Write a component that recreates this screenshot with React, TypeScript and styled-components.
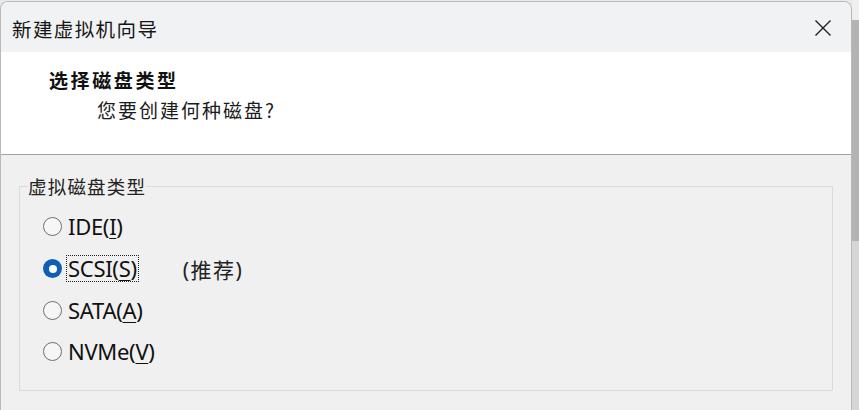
import React from "react";
import styled, { createGlobalStyle } from "styled-components";

const Global = createGlobalStyle`
  html, body { margin: 0; padding: 0; }
  body {
    width: 859px; height: 410px; overflow: hidden;
    background: #e9e9e9;
    font-family: "Noto Sans", "Noto Sans CJK SC", sans-serif;
  }
`;

const Screen = styled.div`
  display: flex;
  width: 859px;
  height: 410px;
`;

const Window = styled.div`
  flex: 1;
  margin-top: 1px;
  display: flex;
  flex-direction: column;
  border: 1px solid #b9b9b9;
  border-bottom: none;
  border-radius: 8px 8px 0 0;
  overflow: hidden;
  background: #f0f0f0;
`;

const TitleBar = styled.div`
  height: 50px;
  flex-shrink: 0;
  background: #f1f2f4;
  display: flex;
  align-items: center;
  justify-content: space-between;
  padding: 0 19px 0 11px;
`;

const TitleText = styled.div`
  font-family: "Noto Sans CJK SC", sans-serif;
  font-size: 19.5px;
  letter-spacing: 1.4px;
  color: #161616;
  padding-top: 2px;
`;

const CloseButton = styled.div`
  width: 18px;
  height: 18px;
  display: flex;
  margin-top: 2px;
`;

const Header = styled.div`
  height: 103px;
  flex-shrink: 0;
  background: #ffffff;
  border-bottom: 1px solid #a3a3a3;
  display: flex;
  flex-direction: column;
  padding: 14px 0 0 48px;
  box-sizing: border-box;
`;

const HeaderTitle = styled.div`
  font-family: "Noto Sans CJK SC", sans-serif;
  font-weight: 700;
  font-size: 19px;
  letter-spacing: 2.6px;
  color: #111;
  line-height: 28px;
`;

const HeaderSub = styled.div`
  font-family: "Noto Sans CJK SC", sans-serif;
  font-size: 19px;
  letter-spacing: 2px;
  color: #1b1b1b;
  line-height: 28px;
  margin-top: 2px;
  padding-left: 48px;
`;

const Body = styled.div`
  flex: 1;
  background: #f0f0f0;
  padding: 19px 18px 0 18px;
`;

const GroupBox = styled.fieldset`
  margin: 0;
  height: 217px;
  box-sizing: border-box;
  border: 1px solid #dadada;
  padding: 0 8px;
`;

const Legend = styled.legend`
  font-family: "Noto Sans CJK SC", sans-serif;
  font-size: 18.5px;
  letter-spacing: 1.2px;
  color: #222;
  padding: 0;
  line-height: 24px;
`;

const OptionList = styled.div`
  display: flex;
  flex-direction: column;
  padding: 8px 0 0 14px;
`;

const Row = styled.label`
  display: flex;
  align-items: center;
  height: 41.7px;
  font-family: "Noto Sans", "Noto Sans CJK SC", sans-serif;
  font-size: 22px;
  color: #111;
`;

const RadioCircle = styled.span<{ $checked?: boolean }>`
  width: 19px;
  height: 19px;
  flex-shrink: 0;
  border-radius: 50%;
  box-sizing: border-box;
  margin: 0 5px 0 1px;
  background: ${(p) => (p.$checked ? "#0f5fb4" : "#f6f6f6")};
  border: ${(p) => (p.$checked ? "none" : "1px solid #6f6f6f")};
  display: flex;
  align-items: center;
  justify-content: center;
  &::after {
    content: "";
    display: ${(p) => (p.$checked ? "block" : "none")};
    width: 8px;
    height: 8px;
    border-radius: 50%;
    background: #fff;
  }
`;

const LabelText = styled.span<{ $focused?: boolean }>`
  outline: ${(p) => (p.$focused ? "1px dotted #222" : "none")};
  padding: 0 1px;
  line-height: 25px;
  letter-spacing: -0.3px;
`;

const Underline = styled.span`
  text-decoration: underline;
  text-underline-offset: 3px;
  text-decoration-thickness: 1px;
`;

const Note = styled.span`
  margin-left: 45px;
  font-family: "Noto Sans", "Noto Sans CJK SC", sans-serif;
  font-size: 21px;
  color: #222;
  letter-spacing: 1.5px;
`;

const ScrollStrip = styled.div`
  width: 7px;
  display: flex;
  flex-direction: column;
`;

const StripTop = styled.div`
  height: 20px;
  background: #efefef;
`;

const StripThumb = styled.div`
  height: 221px;
  background: #b3b3b3;
`;

const StripTrack = styled.div`
  flex: 1;
  background: #d6d6d6;
`;

const options = [
  { label: "IDE", key: "I" },
  { label: "SCSI", key: "S", checked: true, note: "(推荐)" },
  { label: "SATA", key: "A" },
  { label: "NVMe", key: "V" },
];

export default function App() {
  return (
    <>
      <Global />
      <Screen>
        <Window>
          <TitleBar>
            <TitleText>新建虚拟机向导</TitleText>
            <CloseButton>
              <svg width="18" height="18" viewBox="0 0 18 18">
                <path d="M1.5 1.5 L16.5 16.5 M16.5 1.5 L1.5 16.5" stroke="#1f1f1f" strokeWidth="1.4" fill="none" />
              </svg>
            </CloseButton>
          </TitleBar>
          <Header>
            <HeaderTitle>选择磁盘类型</HeaderTitle>
            <HeaderSub>您要创建何种磁盘?</HeaderSub>
          </Header>
          <Body>
            <GroupBox>
              <Legend>虚拟磁盘类型</Legend>
              <OptionList>
                {options.map((o) => (
                  <Row key={o.label}>
                    <RadioCircle $checked={o.checked} />
                    <LabelText $focused={o.checked}>
                      {o.label}(<Underline>{o.key}</Underline>)
                    </LabelText>
                    {o.note && <Note>{o.note}</Note>}
                  </Row>
                ))}
              </OptionList>
            </GroupBox>
          </Body>
        </Window>
        <ScrollStrip>
          <StripTop />
          <StripThumb />
          <StripTrack />
        </ScrollStrip>
      </Screen>
    </>
  );
}
